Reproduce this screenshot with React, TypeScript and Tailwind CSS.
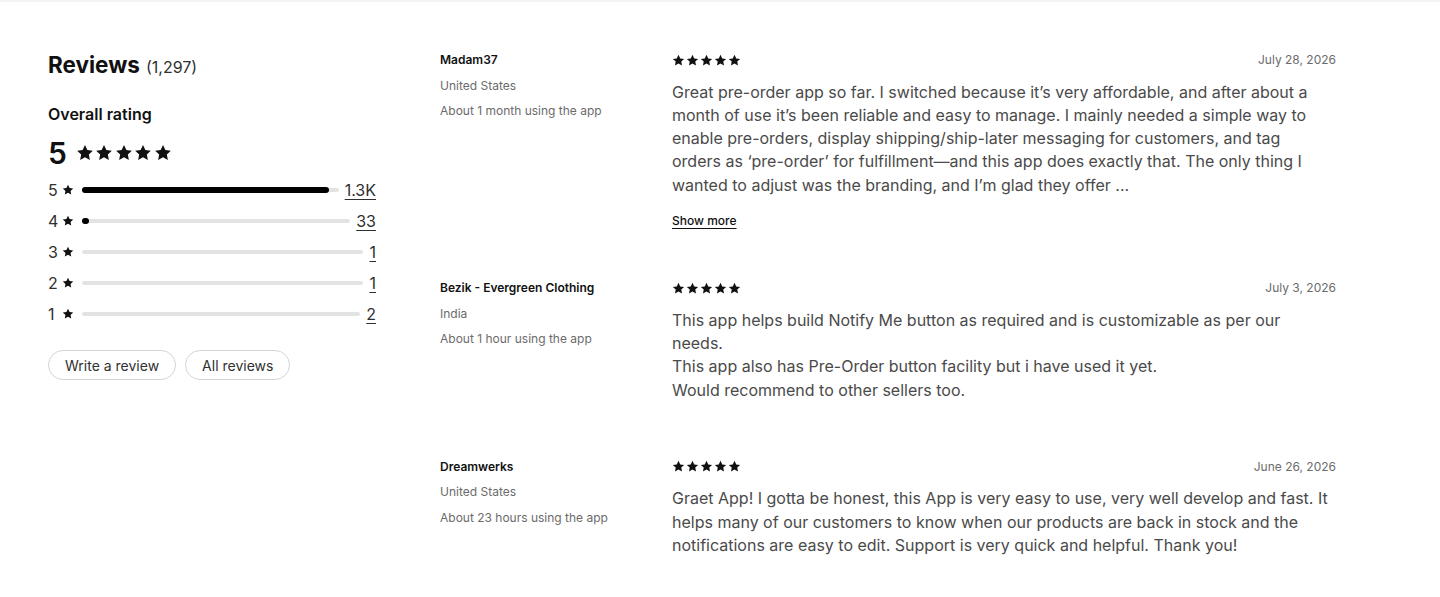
import React from "react";

const FONT = { fontFamily: "Inter, 'Noto Sans', Arial, sans-serif" };

function Star({ className }: { className: string }) {
  return (
    <svg viewBox="0 0 20 20" className={className} fill="currentColor" aria-hidden="true">
      <path d="M10 1.2l2.65 5.6 6.05.75-4.45 4.15 1.15 6L10 14.75 4.6 17.7l1.15-6L1.3 7.55l6.05-.75z" />
    </svg>
  );
}

function Stars({ size, gap }: { size: string; gap: string }) {
  return (
    <div className={`flex items-center ${gap}`}>
      {[0, 1, 2, 3, 4].map((i) => (
        <Star key={i} className={`${size} text-[#111]`} />
      ))}
    </div>
  );
}

const distribution = [
  { stars: 5, label: "1.3K", count: 1250 },
  { stars: 4, label: "33", count: 33 },
  { stars: 3, label: "1", count: 1 },
  { stars: 2, label: "1", count: 1 },
  { stars: 1, label: "2", count: 2 },
];
const total = 1297;

type Review = {
  name: string;
  country: string;
  usage: string;
  date: string;
  body: string[];
  more?: boolean;
  gap: string;
};

const reviews: Review[] = [
  {
    name: "Madam37",
    country: "United States",
    usage: "About 1 month using the app",
    date: "July 28, 2026",
    body: [
      "Great pre-order app so far. I switched because it\u2019s very affordable, and after about a month of use it\u2019s been reliable and easy to manage. I mainly needed a simple way to enable pre-orders, display shipping/ship-later messaging for customers, and tag orders as \u2018pre-order\u2019 for fulfillment\u2014and this app does exactly that. The only thing I wanted to adjust was the branding, and I\u2019m glad they offer ...",
    ],
    more: true,
    gap: "",
  },
  {
    name: "Bezik - Evergreen Clothing",
    country: "India",
    usage: "About 1 hour using the app",
    date: "July 3, 2026",
    body: [
      "This app helps build Notify Me button as required and is customizable as per our needs.",
      "This app also has Pre-Order button facility but i have used it yet.",
      "Would recommend to other sellers too.",
    ],
    gap: "mt-[49px]",
  },
  {
    name: "Dreamwerks",
    country: "United States",
    usage: "About 23 hours using the app",
    date: "June 26, 2026",
    body: [
      "Graet App! I gotta be honest, this App is very easy to use, very well develop and fast. It helps many of our customers to know when our products are back in stock and the notifications are easy to edit. Support is very quick and helpful. Thank you!",
    ],
    gap: "mt-[57px]",
  },
];

function RatingRow({ stars, label, count }: { stars: number; label: string; count: number }) {
  const pct = (count / total) * 100;
  return (
    <div className="flex h-[31px] items-center">
      <span className="w-[14px] text-[16px] leading-none text-[#303030]">{stars}</span>
      <Star className="h-[12px] w-[12px] text-[#111]" />
      <div className="ml-[8px] flex h-[6px] flex-1 items-center">
        <div className="relative h-[4px] w-full rounded-full bg-[#e3e3e3]">
          {pct >= 1 && (
            <div
              className="absolute left-0 top-1/2 h-[6px] min-w-[7px] -translate-y-1/2 rounded-full bg-black"
              style={{ width: `${pct}%` }}
            />
          )}
        </div>
      </div>
      <a className="ml-[6px] text-[16px] leading-[20px] text-[#303030] underline underline-offset-[3px] decoration-[1px]">
        {label}
      </a>
    </div>
  );
}

export default function App() {
  return (
    <div style={FONT} className="min-h-[597px] w-full border-t-2 border-[#f3f3f3] bg-white text-[#303030]">
      <div className="flex px-[48px] pt-[46px]">
        {/* Summary column */}
        <aside className="mt-[1px] w-[328px] shrink-0">
          <h2 className="flex items-baseline gap-[6px] leading-[32px]">
            <span className="text-[22.5px] font-bold text-[#111]">Reviews</span>
            <span className="text-[16px] text-[#303030]">(1,297)</span>
          </h2>
          <div className="mt-[19px] text-[16px] font-semibold leading-[24px] text-[#111]">Overall rating</div>
          <div className="mt-[7px] flex h-[40px] items-center gap-[9px]">
            <span className="text-[30px] font-semibold leading-none text-[#111]">5</span>
            <Stars size="h-[18px] w-[18px]" gap="gap-[1.5px]" />
          </div>
          <div className="mt-[1px]">
            {distribution.map((d) => (
              <RatingRow key={d.stars} {...d} />
            ))}
          </div>
          <div className="mt-[21px] flex gap-[9px]">
            <button className="h-[30px] rounded-full border border-[#d4d4d4] px-[16px] text-[14px] text-[#303030]">
              Write a review
            </button>
            <button className="h-[30px] rounded-full border border-[#d4d4d4] px-[16px] text-[14px] text-[#303030]">
              All reviews
            </button>
          </div>
        </aside>

        {/* Review list */}
        <section className="ml-[64px] w-[896px] pt-[4px]">
          {reviews.map((r) => (
            <article key={r.name} className={`flex ${r.gap}`}>
              <div className="flex w-[232px] shrink-0 flex-col gap-[9.5px] text-[12px] leading-[16px]">
                <span className="font-semibold text-[#111]">{r.name}</span>
                <span className="text-[#6b6b6b]">{r.country}</span>
                <span className="text-[#6b6b6b]">{r.usage}</span>
              </div>
              <div className="flex-1">
                <div className="flex h-[16px] items-center justify-between">
                  <Stars size="h-[13px] w-[13px]" gap="gap-[1px]" />
                  <span className="text-[12px] text-[#6b6b6b]">{r.date}</span>
                </div>
                <div className="mt-[12.5px] w-[660px] text-[16px] leading-[23.25px] text-[#4a4a4a]">
                  {r.body.map((p, i) => (
                    <p key={i}>{p}</p>
                  ))}
                </div>
                {r.more && (
                  <button className="mt-[16.5px] text-[12px] font-medium leading-[16px] text-[#111] underline underline-offset-[3px]">
                    Show more
                  </button>
                )}
              </div>
            </article>
          ))}
        </section>
      </div>
    </div>
  );
}
